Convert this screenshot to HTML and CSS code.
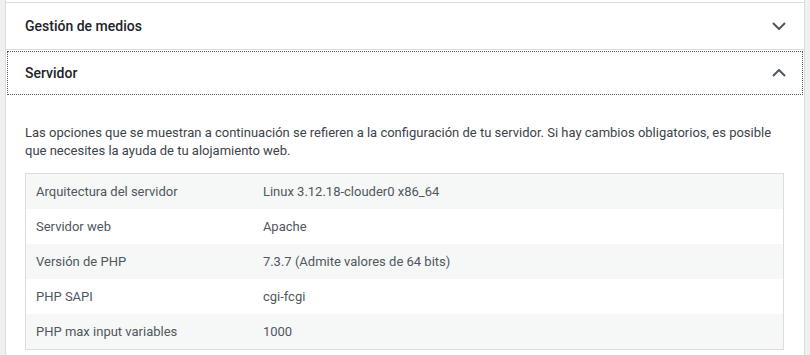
FILE: index.html
```html
<!DOCTYPE html>
<html lang="es">

<head>
  <meta charset="UTF-8">
  <meta name="viewport" content="width=device-width, initial-scale=1.0">
  <title>Salud del sitio - Información</title>
  <link rel="stylesheet" href="styles.css">
</head>

<body>
  <div class="accordion">
    <!-- Sección cerrada -->
    <h3 class="accordion-heading">
      <button class="accordion-trigger" type="button" aria-expanded="false">
        <span class="title">Gestión de medios</span>
        <svg class="icon" width="14" height="8" viewBox="0 0 14 8"><polyline points="1,1 7,7 13,1" /></svg>
      </button>
    </h3>

    <!-- Sección abierta -->
    <h3 class="accordion-heading">
      <button class="accordion-trigger focused" type="button" aria-expanded="true">
        <span class="title">Servidor</span>
        <svg class="icon" width="14" height="8" viewBox="0 0 14 8"><polyline points="1,7 7,1 13,7" /></svg>
      </button>
    </h3>
    <div class="accordion-panel">
      <p>Las opciones que se muestran a continuación se refieren a la configuración de tu servidor. Si hay cambios obligatorios, es posible que necesites la ayuda de tu alojamiento web.</p>
      <table class="info-table">
        <tbody>
          <tr><td>Arquitectura del servidor</td><td>Linux 3.12.18-clouder0 x86_64</td></tr>
          <tr><td>Servidor web</td><td>Apache</td></tr>
          <tr><td>Versión de PHP</td><td>7.3.7 (Admite valores de 64 bits)</td></tr>
          <tr><td>PHP SAPI</td><td>cgi-fcgi</td></tr>
          <tr><td>PHP max input variables</td><td>1000</td></tr>
        </tbody>
      </table>
    </div>
  </div>
</body>

</html>
```

FILE: styles.css
```css
body {
  margin: 0;
  padding: 0 5px;
  background-color: #f0f0f1;
  font-family: Roboto, sans-serif;
  font-size: 13px;
  color: #50575e;
}

.accordion {
  background-color: #fff;
  border-left: 1px solid #dcdcde;
  border-right: 1px solid #dcdcde;
  padding-top: 2px;
}

.accordion-heading {
  margin: 0;
  border-top: 1px solid #dcdcde;
}

.accordion-trigger {
  display: flex;
  align-items: center;
  justify-content: space-between;
  width: 100%;
  height: 46px;
  padding: 0 18px 0 19px;
  border: none;
  background: #fff;
  font-family: inherit;
  font-size: 14px;
  font-weight: 500;
  color: #1d2327;
  text-align: left;
  cursor: pointer;
}

.accordion-trigger.focused {
  outline: 1px dotted #50575e;
  outline-offset: -2px;
}

.icon {
  fill: none;
  stroke: #50575e;
  stroke-width: 2;
}

.accordion-panel {
  padding: 28px 20px 6px 19px;
}

.accordion-panel p {
  margin: 0 0 13px;
  line-height: 18px;
  color: #3c434a;
}

.info-table {
  width: 100%;
  border: 1px solid #dcdcde;
  border-collapse: collapse;
}

.info-table td {
  padding: 8px 10px;
  line-height: 19px;
  vertical-align: top;
}

.info-table td:first-child {
  width: 30%;
}

.info-table tr:nth-child(odd) {
  background-color: #f6f7f7;
}
```
